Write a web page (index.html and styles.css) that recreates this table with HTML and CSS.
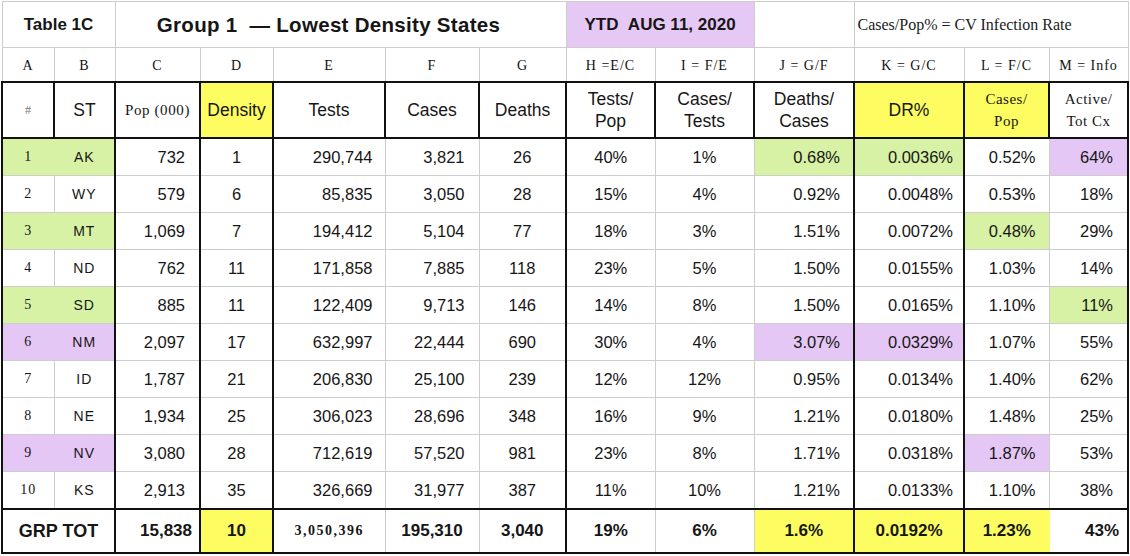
FILE: index.html
```html
<!DOCTYPE html>
<html>
<head>
<meta charset="utf-8">
<link rel="stylesheet" href="styles.css">
</head>
<body>
<table class="sheet">
  <colgroup>
    <col class="w-a"><col class="w-b"><col class="w-c"><col class="w-d"><col class="w-e"><col class="w-f"><col class="w-g"><col class="w-h"><col class="w-i"><col class="w-j"><col class="w-k"><col class="w-l"><col class="w-m">
  </colgroup>
  <tr class="title-row">
    <td colspan="2" class="t-table">Table 1C</td>
    <td colspan="5" class="t-group">Group 1 &nbsp;— Lowest Density States</td>
    <td colspan="2" class="t-ytd">YTD &nbsp;AUG 11, 2020</td>
    <td></td>
    <td colspan="3" class="t-note">Cases/Pop% = CV Infection Rate</td>
  </tr>
  <tr class="letter-row">
    <td>A</td><td>B</td><td>C</td><td>D</td><td>E</td><td>F</td><td>G</td><td>H =E/C</td><td>I = F/E</td><td>J = G/F</td><td>K = G/C</td><td>L = F/C</td><td>M = Info</td>
  </tr>
  <tr class="head-row">
    <td class="serif hash">#</td>
    <td>ST</td>
    <td class="serif pop">Pop (000)</td>
    <td class="y">Density</td>
    <td>Tests</td>
    <td>Cases</td>
    <td>Deaths</td>
    <td>Tests/<br>Pop</td>
    <td>Cases/<br>Tests</td>
    <td>Deaths/<br>Cases</td>
    <td class="y">DR%</td>
    <td class="y serif small2">Cases/<br>Pop</td>
    <td class="serif small2">Active/<br>Tot Cx</td>
  </tr>
  <tr class="data"><td class="g ga">1</td><td class="g">AK</td><td>732</td><td>1</td><td>290,744</td><td>3,821</td><td>26</td><td>40%</td><td>1%</td><td class="g">0.68%</td><td class="g">0.0036%</td><td>0.52%</td><td class="p">64%</td></tr>
  <tr class="data"><td>2</td><td>WY</td><td>579</td><td>6</td><td>85,835</td><td>3,050</td><td>28</td><td>15%</td><td>4%</td><td>0.92%</td><td>0.0048%</td><td>0.53%</td><td>18%</td></tr>
  <tr class="data"><td class="g ga">3</td><td class="g">MT</td><td>1,069</td><td>7</td><td>194,412</td><td>5,104</td><td>77</td><td>18%</td><td>3%</td><td>1.51%</td><td>0.0072%</td><td class="g">0.48%</td><td>29%</td></tr>
  <tr class="data"><td>4</td><td>ND</td><td>762</td><td>11</td><td>171,858</td><td>7,885</td><td>118</td><td>23%</td><td>5%</td><td>1.50%</td><td>0.0155%</td><td>1.03%</td><td>14%</td></tr>
  <tr class="data"><td class="g ga">5</td><td class="g">SD</td><td>885</td><td>11</td><td>122,409</td><td>9,713</td><td>146</td><td>14%</td><td>8%</td><td>1.50%</td><td>0.0165%</td><td>1.10%</td><td class="g">11%</td></tr>
  <tr class="data"><td class="p pa">6</td><td class="p">NM</td><td>2,097</td><td>17</td><td>632,997</td><td>22,444</td><td>690</td><td>30%</td><td>4%</td><td class="p">3.07%</td><td class="p">0.0329%</td><td>1.07%</td><td>55%</td></tr>
  <tr class="data"><td>7</td><td>ID</td><td>1,787</td><td>21</td><td>206,830</td><td>25,100</td><td>239</td><td>12%</td><td>12%</td><td>0.95%</td><td>0.0134%</td><td>1.40%</td><td>62%</td></tr>
  <tr class="data"><td>8</td><td>NE</td><td>1,934</td><td>25</td><td>306,023</td><td>28,696</td><td>348</td><td>16%</td><td>9%</td><td>1.21%</td><td>0.0180%</td><td>1.48%</td><td>25%</td></tr>
  <tr class="data"><td class="p pa">9</td><td class="p">NV</td><td>3,080</td><td>28</td><td>712,619</td><td>57,520</td><td>981</td><td>23%</td><td>8%</td><td>1.71%</td><td>0.0318%</td><td class="p">1.87%</td><td>53%</td></tr>
  <tr class="data"><td>10</td><td>KS</td><td>2,913</td><td>35</td><td>326,669</td><td>31,977</td><td>387</td><td>11%</td><td>10%</td><td>1.21%</td><td>0.0133%</td><td>1.10%</td><td>38%</td></tr>
  <tr class="total">
    <td colspan="2">GRP TOT</td>
    <td>15,838</td>
    <td class="y">10</td>
    <td class="serif big">3,050,396</td>
    <td>195,310</td>
    <td>3,040</td>
    <td>19%</td>
    <td>6%</td>
    <td class="y">1.6%</td>
    <td class="y">0.0192%</td>
    <td class="y yl">1.23%</td>
    <td>43%</td>
  </tr>
</table>
</body>
</html>
```

FILE: styles.css
```css
html, body {
  margin: 0;
  padding: 0;
  background: #ffffff;
}

body {
  padding: 1px 0 0 1px;
  font-family: "Liberation Sans", Arial, sans-serif;
  color: #161616;
}

.sheet {
  border-collapse: collapse;
  table-layout: fixed;
  width: 1127px;
}

.w-a { width: 52px; }
.w-b { width: 61px; }
.w-c { width: 85px; }
.w-d { width: 73px; }
.w-e { width: 112px; }
.w-f { width: 94px; }
.w-g { width: 87px; }
.w-h { width: 89px; }
.w-i { width: 99px; }
.w-j { width: 100px; }
.w-k { width: 110px; }
.w-l { width: 85px; }
.w-m { width: 79px; }

.sheet td {
  border: 1px solid #cdcdcd;
  padding: 0;
  text-align: center;
  vertical-align: middle;
  white-space: nowrap;
  overflow: hidden;
}

/* ---------- title row ---------- */
.title-row td {
  height: 45px;
  font-weight: bold;
}

.t-table {
  font-size: 17px;
}

.t-group {
  font-size: 20.5px;
  letter-spacing: 0.3px;
  padding-right: 24px !important;
}

.t-ytd {
  font-size: 17px;
  background: #e6c8f5;
}

.t-note {
  font-family: "Liberation Serif", "Times New Roman", serif;
  font-weight: normal !important;
  font-size: 16px;
  text-align: left !important;
  padding-left: 3px !important;
  color: #222;
}

/* ---------- column letters ---------- */
.letter-row td {
  height: 30px;
  font-family: "Liberation Serif", "Times New Roman", serif;
  font-size: 14px;
  letter-spacing: 1px;
  color: #111;
  padding-top: 3px;
}

/* ---------- header row ---------- */
.head-row td {
  height: 54px;
  border: 2px solid #111;
  font-size: 17.5px;
  line-height: 22px;
}

.serif {
  font-family: "Liberation Serif", "Times New Roman", serif;
}

.hash {
  font-size: 12px !important;
  color: #777;
}

.pop {
  font-size: 15px !important;
  letter-spacing: 0.6px;
}

.small2 {
  font-size: 15px !important;
  letter-spacing: 0.5px;
}

/* ---------- data rows ---------- */
.data td {
  height: 36px;
  font-size: 16.5px;
}

.data td:nth-child(1) {
  border-left: 2px solid #111;
  font-family: "Liberation Serif", "Times New Roman", serif;
  font-size: 14px;
  letter-spacing: 1px;
}

.data td:nth-child(2) {
  font-size: 14px;
  letter-spacing: 1px;
}

.data td:nth-child(3) {
  border-left: 2px solid #111;
  text-align: right;
  padding-right: 14px;
}

.data td:nth-child(4) {
  border-left: 2px solid #111;
}

.data td:nth-child(5) {
  border-left: 2px solid #111;
  text-align: right;
  padding-right: 12px;
}

.data td:nth-child(6) {
  text-align: right;
  padding-right: 14px;
}

.data td:nth-child(8) {
  border-left: 2px solid #111;
}

.data td:nth-child(10) {
  text-align: right;
  padding-right: 13px;
}

.data td:nth-child(11) {
  border-left: 2px solid #111;
  text-align: right;
  padding-right: 10px;
}

.data td:nth-child(12) {
  border-left: 2px solid #111;
  text-align: right;
  padding-right: 13px;
}

.data td:nth-child(13) {
  border-right: 2px solid #111;
  text-align: right;
  padding-right: 14px;
}

/* ---------- total row ---------- */
.total td {
  height: 42px;
  border-top: 2px solid #111;
  border-bottom: 2px solid #111;
  font-size: 17px;
  font-weight: bold;
}

.total td:nth-child(1) {
  border-left: 2px solid #111;
  font-size: 18px;
}

.total td:nth-child(2) {
  border-left: 2px solid #111;
  text-align: right;
  padding-right: 7px;
}

.total td:nth-child(3),
.total td:nth-child(4),
.total td:nth-child(7),
.total td:nth-child(10),
.total td:nth-child(11) {
  border-left: 2px solid #111;
}

.total td:nth-child(12) {
  border-right: 2px solid #111;
  text-align: right;
  padding-right: 8px;
}

.total .big {
  font-size: 14px;
  letter-spacing: 1.5px;
}

/* ---------- highlights ---------- */
.y { background: #fdfd62; }
.g { background: #d7f2a4; }
.p { background: #e5c7f5; }

.sheet td.ga { border-right-color: #d7f2a4; }
.sheet td.pa { border-right-color: #e5c7f5; }
.sheet td.yl { border-right-color: #fdfd62; }
```
